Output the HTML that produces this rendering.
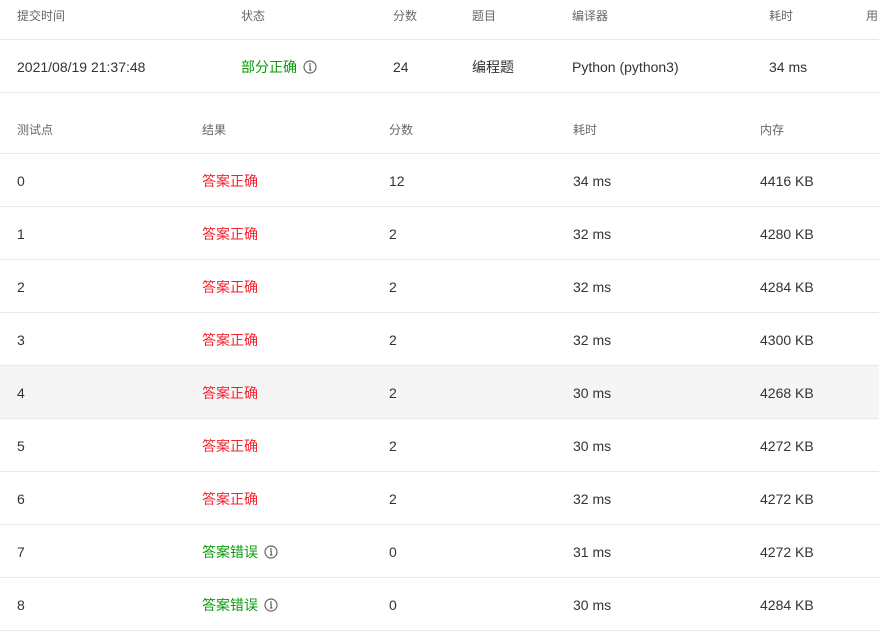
<!DOCTYPE html>
<html><head><meta charset="utf-8"><style>
body{margin:0;width:879px;height:632px;overflow:hidden;background:#fff;font-family:"Liberation Sans","Noto Sans CJK SC",sans-serif;position:relative}
.r{position:absolute;left:0;width:879px}
.l{position:absolute;left:0;width:879px;height:1px;background:#e8e8e8}
.c{position:absolute;white-space:nowrap;line-height:20px;height:20px}
.h{font-size:12px;color:#666}
.d{font-size:14px;color:#333}
.red{color:#f5222d}
.grn{color:#0a9a0a}
.i{display:inline-block;vertical-align:-2px;margin-left:6px}
</style></head><body>
<div class="r" style="top:366px;height:52px;background:#f5f5f5"></div>
<div class="l" style="top:39px"></div>
<div class="l" style="top:92px"></div>
<div class="l" style="top:153px"></div>
<div class="l" style="top:206px"></div>
<div class="l" style="top:259px"></div>
<div class="l" style="top:312px"></div>
<div class="l" style="top:365px"></div>
<div class="l" style="top:418px"></div>
<div class="l" style="top:471px"></div>
<div class="l" style="top:524px"></div>
<div class="l" style="top:577px"></div>
<div class="l" style="top:630px"></div>

<div class="c h" style="top:6px;left:17px">提交时间</div>
<div class="c h" style="top:6px;left:241px">状态</div>
<div class="c h" style="top:6px;left:393px">分数</div>
<div class="c h" style="top:6px;left:472px">题目</div>
<div class="c h" style="top:6px;left:572px">编译器</div>
<div class="c h" style="top:6px;left:769px">耗时</div>
<div class="c h" style="top:6px;left:866px">用</div>

<div class="c d" style="top:57px;left:17px">2021/08/19 21:37:48</div>
<div class="c d grn" style="top:57px;left:241px">部分正确<svg class="i" width="14" height="14" viewBox="0 0 14 14"><circle cx="7" cy="7" r="6" fill="none" stroke="#666" stroke-width="1.2"/><circle cx="7" cy="4" r="0.9" fill="#666"/><path d="M6 6h1.2v4M6 10h2.4" stroke="#666" stroke-width="1.2" fill="none"/></svg></div>
<div class="c d" style="top:57px;left:393px">24</div>
<div class="c d" style="top:57px;left:472px">编程题</div>
<div class="c d" style="top:57px;left:572px">Python (python3)</div>
<div class="c d" style="top:57px;left:769px">34 ms</div>

<div class="c h" style="top:120px;left:17px">测试点</div>
<div class="c h" style="top:120px;left:202px">结果</div>
<div class="c h" style="top:120px;left:389px">分数</div>
<div class="c h" style="top:120px;left:573px">耗时</div>
<div class="c h" style="top:120px;left:760px">内存</div>

<div class="c d" style="top:171px;left:17px">0</div><div class="c d red" style="top:171px;left:202px">答案正确</div><div class="c d" style="top:171px;left:389px">12</div><div class="c d" style="top:171px;left:573px">34 ms</div><div class="c d" style="top:171px;left:760px">4416 KB</div>
<div class="c d" style="top:224px;left:17px">1</div><div class="c d red" style="top:224px;left:202px">答案正确</div><div class="c d" style="top:224px;left:389px">2</div><div class="c d" style="top:224px;left:573px">32 ms</div><div class="c d" style="top:224px;left:760px">4280 KB</div>
<div class="c d" style="top:277px;left:17px">2</div><div class="c d red" style="top:277px;left:202px">答案正确</div><div class="c d" style="top:277px;left:389px">2</div><div class="c d" style="top:277px;left:573px">32 ms</div><div class="c d" style="top:277px;left:760px">4284 KB</div>
<div class="c d" style="top:330px;left:17px">3</div><div class="c d red" style="top:330px;left:202px">答案正确</div><div class="c d" style="top:330px;left:389px">2</div><div class="c d" style="top:330px;left:573px">32 ms</div><div class="c d" style="top:330px;left:760px">4300 KB</div>
<div class="c d" style="top:383px;left:17px">4</div><div class="c d red" style="top:383px;left:202px">答案正确</div><div class="c d" style="top:383px;left:389px">2</div><div class="c d" style="top:383px;left:573px">30 ms</div><div class="c d" style="top:383px;left:760px">4268 KB</div>
<div class="c d" style="top:436px;left:17px">5</div><div class="c d red" style="top:436px;left:202px">答案正确</div><div class="c d" style="top:436px;left:389px">2</div><div class="c d" style="top:436px;left:573px">30 ms</div><div class="c d" style="top:436px;left:760px">4272 KB</div>
<div class="c d" style="top:489px;left:17px">6</div><div class="c d red" style="top:489px;left:202px">答案正确</div><div class="c d" style="top:489px;left:389px">2</div><div class="c d" style="top:489px;left:573px">32 ms</div><div class="c d" style="top:489px;left:760px">4272 KB</div>
<div class="c d" style="top:542px;left:17px">7</div><div class="c d grn" style="top:542px;left:202px">答案错误<svg class="i" width="14" height="14" viewBox="0 0 14 14"><circle cx="7" cy="7" r="6" fill="none" stroke="#666" stroke-width="1.2"/><circle cx="7" cy="4" r="0.9" fill="#666"/><path d="M6 6h1.2v4M6 10h2.4" stroke="#666" stroke-width="1.2" fill="none"/></svg></div><div class="c d" style="top:542px;left:389px">0</div><div class="c d" style="top:542px;left:573px">31 ms</div><div class="c d" style="top:542px;left:760px">4272 KB</div>
<div class="c d" style="top:595px;left:17px">8</div><div class="c d grn" style="top:595px;left:202px">答案错误<svg class="i" width="14" height="14" viewBox="0 0 14 14"><circle cx="7" cy="7" r="6" fill="none" stroke="#666" stroke-width="1.2"/><circle cx="7" cy="4" r="0.9" fill="#666"/><path d="M6 6h1.2v4M6 10h2.4" stroke="#666" stroke-width="1.2" fill="none"/></svg></div><div class="c d" style="top:595px;left:389px">0</div><div class="c d" style="top:595px;left:573px">30 ms</div><div class="c d" style="top:595px;left:760px">4284 KB</div>
</body></html>
